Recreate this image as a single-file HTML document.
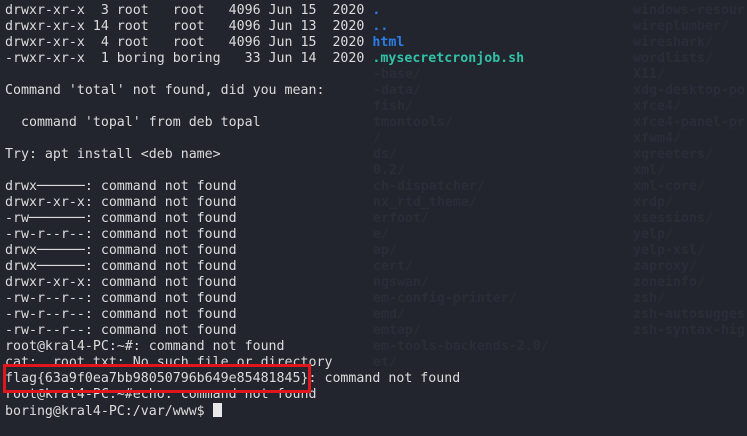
<!DOCTYPE html>
<html><head><style>
html,body{margin:0;padding:0;background:#23252e;width:747px;height:436px;overflow:hidden}
pre{margin:0;position:absolute;left:5px;top:3px;font-family:"DejaVu Sans Mono","Liberation Mono",monospace;font-size:13.28px;line-height:16px;color:#dcdcdc}
.b{color:#2b7de6;font-weight:bold}
.t{color:#2fc2a6;font-weight:bold}
.bg{position:absolute;font-family:"DejaVu Sans Mono",monospace;font-size:13.28px;line-height:16px;color:#292d39;font-weight:bold;margin:0}
.box{position:absolute;left:3px;top:364px;width:302px;height:23px;border:3px solid #e1161c}
.cur{display:inline-block;width:9px;height:14px;background:#e8e8e8;vertical-align:-2px}
</style></head><body>
<pre class="bg" style="left:633px;top:3px">windows-resour
wireplumber/
wireshark/
wordlists/
X11/
xdg-desktop-po
xfce4/
xfce4-panel-pr
xfwm4/
xgreeters/
xml/
xml-core/
xrdp/
xsessions/
yelp/
yelp-xsl/
zaproxy/
zoneinfo/
zsh/
zsh-autosugges
zsh-syntax-hig</pre>
<pre class="bg" style="left:373px;top:67px">-base/
-data/
fish/
tmontools/
/
ds/
0.2/
ch-dispatcher/
nx_rtd_theme/
erfoot/
e/
ap/
cert/
ngswan/
em-config-printer/
emd/
emtap/
em-tools-backends-2.0/
et/</pre>
<pre>drwxr-xr-x  3 root   root   4096 Jun 15  2020 <span class="b">.</span>
drwxr-xr-x 14 root   root   4096 Jun 13  2020 <span class="b">..</span>
drwxr-xr-x  4 root   root   4096 Jun 15  2020 <span class="b">html</span>
-rwxr-xr-x  1 boring boring   33 Jun 14  2020 <span class="t">.mysecretcronjob.sh</span>

Command 'total' not found, did you mean:

  command 'topal' from deb topal

Try: apt install &lt;deb name&gt;

drwx──────: command not found
drwxr-xr-x: command not found
-rw───────: command not found
-rw-r--r--: command not found
drwx──────: command not found
drwx──────: command not found
drwxr-xr-x: command not found
-rw-r--r--: command not found
-rw-r--r--: command not found
-rw-r--r--: command not found
root@kral4-PC:~#: command not found
cat: .root.txt: No such file or directory
flag{63a9f0ea7bb98050796b649e85481845}: command not found
root@kral4-PC:~#echo: command not found
boring@kral4-PC:/var/www$ <span class="cur"></span></pre>
<div class="box"></div>
</body></html>
